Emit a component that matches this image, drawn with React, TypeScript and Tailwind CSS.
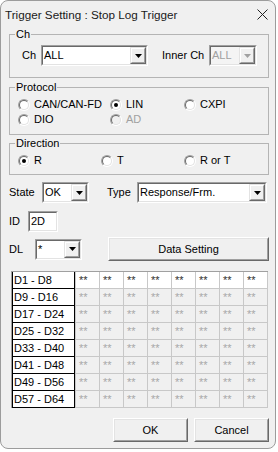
import React from "react";

type BoxProps = { className?: string; inner?: string; children?: React.ReactNode };

function Sunken({ className = "", inner = "", children }: BoxProps) {
  return (
    <div className={`border border-t-[#a0a0a0] border-l-[#a0a0a0] border-b-white border-r-white ${className}`}>
      <div className={`h-full w-full border border-t-[#696969] border-l-[#696969] border-b-[#e3e3e3] border-r-[#e3e3e3] ${inner}`}>
        {children}
      </div>
    </div>
  );
}

function Raised({ className = "", inner = "", children }: BoxProps) {
  return (
    <div className={`border border-t-white border-l-white border-b-[#696969] border-r-[#696969] ${className}`}>
      <div className={`h-full w-full border border-t-[#e3e3e3] border-l-[#e3e3e3] border-b-[#a0a0a0] border-r-[#a0a0a0] bg-[#f0f0f0] ${inner}`}>
        {children}
      </div>
    </div>
  );
}

function DropBtn({ disabled = false }: { disabled?: boolean }) {
  return (
    <div className="h-[17px] w-[16px] shrink-0 border border-t-[#e3e3e3] border-l-[#e3e3e3] border-b-[#696969] border-r-[#696969]">
      <div className="flex h-full w-full items-center justify-center border border-t-white border-l-white border-b-[#a0a0a0] border-r-[#a0a0a0] bg-[#f0f0f0]">
        <svg width="7" height="4" viewBox="0 0 7 4">
          <polygon points="0,0 7,0 3.5,4" fill={disabled ? "#a0a0a0" : "#000"} />
        </svg>
      </div>
    </div>
  );
}

function Combo({ className = "", value, disabled = false }: { className?: string; value: string; disabled?: boolean }) {
  return (
    <Sunken
      className={`h-[21px] shrink-0 ${className}`}
      inner={`flex items-center ${disabled ? "bg-[#f4f4f4] text-[#a0a0a0]" : "bg-white"}`}
    >
      <span className="flex-1 pl-[1px] leading-[13px]">{value}</span>
      <DropBtn disabled={disabled} />
    </Sunken>
  );
}

function Radio({ label, checked = false, disabled = false }: { label: string; checked?: boolean; disabled?: boolean }) {
  return (
    <div className="flex h-[15px] items-center">
      <div className="h-[12px] w-[12px] shrink-0 rounded-full border border-t-[#a0a0a0] border-l-[#a0a0a0] border-b-white border-r-white">
        <div
          className={`flex h-full w-full items-center justify-center rounded-full border border-t-[#696969] border-l-[#696969] border-b-[#e3e3e3] border-r-[#e3e3e3] ${
            disabled ? "bg-[#f0f0f0]" : "bg-white"
          }`}
        >
          {checked && <div className="h-[4px] w-[4px] rounded-full bg-black" />}
        </div>
      </div>
      <span className={`ml-[4px] leading-[13px] ${disabled ? "text-[#a0a0a0]" : ""}`}>{label}</span>
    </div>
  );
}

function Group({ title, className = "", children }: { title: string; className?: string; children?: React.ReactNode }) {
  return (
    <fieldset className={`ml-[8px] w-[260px] min-w-0 border border-[#b4b4b4] ${className}`}>
      <legend className="ml-[5px] px-[1px] leading-[12px]">{title}</legend>
      {children}
    </fieldset>
  );
}

const rows = ["D1 - D8", "D9 - D16", "D17 - D24", "D25 - D32", "D33 - D40", "D41 - D48", "D49 - D56", "D57 - D64"];
const cols = [0, 1, 2, 3, 4, 5, 6, 7];

export default function App() {
  return (
    <div className="h-[452px] w-[278px] bg-white">
      <div className="flex h-[449px] w-[276px] flex-col overflow-hidden rounded-[8px] border border-[#9c9c9c] bg-[#f0f0f0] font-['Liberation_Sans',Arial,sans-serif] text-[11px] text-black">
        {/* Title bar */}
        <div className="flex h-[27px] shrink-0 items-center justify-between pl-[4px] pr-[6px]">
          <span className="text-[11.7px] leading-[14px] text-[#1a1a1a]">Trigger Setting : Stop Log Trigger</span>
          <svg width="11" height="11" viewBox="0 0 11 11" className="mr-[1px]">
            <path d="M0.5 0.5 L10.5 10.5 M10.5 0.5 L0.5 10.5" stroke="#222" strokeWidth="1" />
          </svg>
        </div>

        {/* Ch */}
        <Group title="Ch">
          <div className="mt-[5px] mb-[11px] flex items-center pl-[12px]">
            <span className="w-[19px] leading-[13px]">Ch</span>
            <Combo className="w-[107px]" value="ALL" />
            <span className="ml-[14px] w-[47px] leading-[13px]">Inner Ch</span>
            <Combo className="w-[48px]" value="ALL" disabled />
          </div>
        </Group>

        {/* Protocol */}
        <Group title="Protocol" className="mt-[3px]">
          <div className="mt-[4px] mb-[7px] grid grid-cols-[92px_74px_1fr] pl-[8px]">
            <Radio label="CAN/CAN-FD" />
            <Radio label="LIN" checked />
            <Radio label="CXPI" />
            <Radio label="DIO" />
            <Radio label="AD" disabled />
          </div>
        </Group>

        {/* Direction */}
        <Group title="Direction" className="mt-[2px]">
          <div className="mt-[4px] mb-[6px] grid grid-cols-[83px_83px_1fr] pl-[8px]">
            <Radio label="R" checked />
            <Radio label="T" />
            <Radio label="R or T" />
          </div>
        </Group>

        {/* State / Type */}
        <div className="mt-[7px] flex items-center pl-[8px]">
          <span className="w-[33px] leading-[13px]">State</span>
          <Combo className="w-[47px]" value="OK" />
          <span className="ml-[18px] w-[30px] leading-[13px]">Type</span>
          <Combo className="w-[130px]" value="Response/Frm." />
        </div>

        {/* ID */}
        <div className="mt-[8px] flex items-center pl-[8px]">
          <span className="w-[19px] leading-[13px]">ID</span>
          <Sunken className="h-[21px] w-[30px]" inner="flex items-center bg-white pl-[1px]">
            <span className="leading-[13px]">2D</span>
          </Sunken>
        </div>

        {/* DL / Data Setting */}
        <div className="mt-[5px] flex h-[24px] items-center pl-[8px]">
          <span className="w-[26px] leading-[13px]">DL</span>
          <Combo className="w-[47px]" value="*" />
          <Raised className="ml-[26px] h-[24px] w-[161px]" inner="flex items-center justify-center">
            <span className="leading-[13px]">Data Setting</span>
          </Raised>
        </div>

        {/* Grid */}
        <div className="ml-[10px] mt-[10px] w-[257px] border-l border-t border-[#a0a0a0]">
          {rows.map((r, i) => (
            <div key={r} className="flex h-[17px]">
              <div className="flex w-[63px] items-center border-b border-l border-r border-black bg-white pl-[1px] leading-[13px]">
                {r}
              </div>
              {cols.map((c) => (
                <div
                  key={c}
                  className={`${c === 0 ? "w-[25px] border-l" : "w-[24px]"} border-b border-r border-[#c8c8c8] pl-[3px] pt-[2px] leading-[13px] ${
                    i === 0 ? "bg-white text-[#303030]" : "bg-[#f0f0f0] text-[#a8a8a8]"
                  }`}
                >
                  **
                </div>
              ))}
            </div>
          ))}
        </div>

        {/* Buttons */}
        <div className="mt-[10px] flex pl-[112px]">
          <Raised className="h-[24px] w-[75px]" inner="flex items-center justify-center">
            <span className="leading-[13px]">OK</span>
          </Raised>
          <Raised className="ml-[6px] h-[24px] w-[75px]" inner="flex items-center justify-center">
            <span className="leading-[13px]">Cancel</span>
          </Raised>
        </div>
      </div>
    </div>
  );
}
